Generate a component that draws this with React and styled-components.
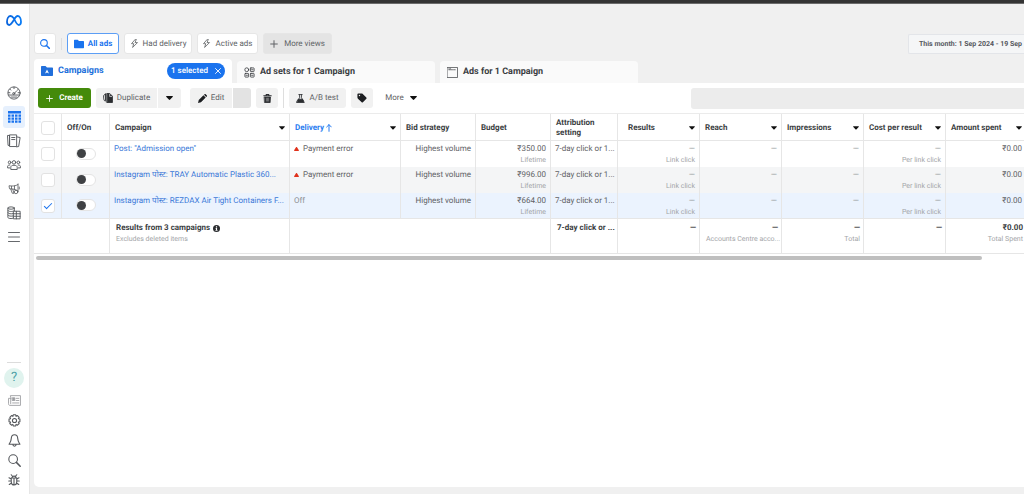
import React from "react";
import styled, { createGlobalStyle, css } from "styled-components";

const GlobalStyle = createGlobalStyle`
  *, *::before, *::after { box-sizing: border-box; }
  body {
    margin: 0;
    background: #f0f0f0;
    color: #3b3e42;
    font-family: Roboto, "Noto Sans", "Liberation Sans", sans-serif;
    font-size: 8px;
    line-height: 12px;
    text-rendering: geometricPrecision;
    overflow: hidden;
  }
  button, input { font: inherit; color: inherit; margin: 0; padding: 0; border: 0; text-rendering: inherit; }
  button { cursor: pointer; background: none; }
  a { text-decoration: none; color: inherit; }
`;

const Page = styled.div`
  display: flex;
  flex-direction: column;
  height: 100vh;
`;
const WindowEdge = styled.div`
  flex: none;
  height: 4px;
  background: #343434;
  border-bottom: 1px solid #6b6b6b;
`;
const Body = styled.div`
  flex: 1;
  min-height: 0;
  display: flex;
`;

/* Sidebar */
const Sidebar = styled.nav`
  flex: none;
  width: 30px;
  padding: 6px 1px 4px 0;
  background: #fff;
  border-right: 1px solid #e6e6e6;
  display: flex;
  flex-direction: column;
  justify-content: space-between;
`;
const NavGroup = styled.div`
  display: flex;
  flex-direction: column;
  align-items: center;
  gap: ${(p) => p.$gap || 0}px;
`;
const Brand = styled.a`
  display: flex;
  height: 21px;
  align-items: center;
  margin-bottom: 49px;
`;
const NavLink = styled.a`
  display: grid;
  place-items: center;
  width: 22px;
  height: ${(p) => (p.$small ? 20 : 22)}px;
  border-radius: 3px;
  color: ${(p) => (p.$active ? "#1a73ee" : "#55585c")};
  background: ${(p) => (p.$active ? "#e6f0fd" : "none")};
`;
const NavRule = styled.div`
  width: 14px;
  height: 1px;
  margin-bottom: 5px;
  background: #dcdcdc;
`;
const Help = styled.button`
  width: 20px;
  height: 20px;
  border-radius: 50%;
  background: #e0f3ee;
  color: #4a9fa5;
  font-size: 13px;
  margin-bottom: 2px;
`;

/* Main column */
const Main = styled.main`
  flex: 1;
  min-width: 0;
  padding: 29px 0 7px 4px;
  display: flex;
  flex-direction: column;
`;
const Views = styled.div`
  display: flex;
  align-items: center;
  gap: 5px;
  height: 21px;
`;
const Rule = styled.span`
  width: 1px;
  height: ${(p) => p.$height}px;
  background: #dedede;
`;
const ViewButton = styled.button`
  display: flex;
  align-items: center;
  justify-content: center;
  gap: ${(p) => p.$gap || 4}px;
  width: ${(p) => p.$width}px;
  height: 21px;
  border-radius: 3px;
  border: 1px solid ${(p) => (p.$active ? "#5c9ef5" : "#e6e6e6")};
  background: ${(p) => (p.$muted ? "#e4e4e4" : "#fff")};
  color: ${(p) => (p.$active || p.$accent ? "#1a73ee" : "#606366")};
  font-weight: ${(p) => (p.$active ? 700 : 400)};
  white-space: nowrap;
`;
const DateRange = styled.button`
  width: 116px;
  height: 20px;
  margin-left: auto;
  padding-left: 10px;
  border: 1px solid #e3e5e9;
  border-right: 0;
  border-radius: 2px 0 0 2px;
  background: #f5f6f7;
  color: #55585e;
  font-size: 7px;
  font-weight: 700;
  text-align: left;
  white-space: nowrap;
`;

const Tabs = styled.div`
  display: flex;
  align-items: flex-end;
  gap: 5px;
  height: 24px;
  margin-top: 5px;
`;
const Tab = styled.div`
  flex: none;
  display: flex;
  align-items: center;
  gap: 5px;
  width: 198px;
  height: ${(p) => (p.$active ? 24 : 22)}px;
  padding: 0 7px;
  border-radius: 4px 4px 0 0;
  background: ${(p) => (p.$active ? "#fff" : "#fafafa")};
  color: ${(p) => (p.$active ? "#216fdb" : "#3b3e42")};
  font-size: 9px;
  font-weight: 700;
`;
const TabLabel = styled.button`
  display: flex;
  align-items: center;
  gap: 5px;
`;
const Chip = styled.button`
  display: flex;
  align-items: center;
  justify-content: center;
  gap: 7px;
  width: 58px;
  height: 16px;
  margin-left: auto;
  border-radius: 8px;
  background: #1a73ee;
  color: #fff;
  font-size: 8px;
  font-weight: 500;
`;

const Panel = styled.section`
  flex: 1;
  min-height: 0;
  background: #fff;
  border-radius: 0 0 0 5px;
  overflow: hidden;
`;
const Toolbar = styled.div`
  display: flex;
  align-items: center;
  gap: 5px;
  height: 31px;
  padding-left: 4px;
  border-bottom: 1px solid #ebebeb;
`;
const ToolButton = styled.button`
  flex: none;
  display: flex;
  align-items: center;
  justify-content: center;
  gap: ${(p) => p.$gap || 4}px;
  width: ${(p) => p.$width}px;
  height: 20px;
  border-radius: ${(p) => p.$radius || "3px"};
  background: #f1f1f1;
  color: #5f6265;
  white-space: nowrap;
  ${(p) => p.$kind === "primary" && css`background: #448a0a; color: #fff; font-weight: 700;`}
  ${(p) => p.$kind === "plain" && css`background: none;`}
  ${(p) => p.$kind === "disabled" && css`background: #e3e3e3;`}
`;
const Split = styled.div`
  display: flex;
  gap: ${(p) => p.$gap}px;
  margin-right: ${(p) => p.$after || 0}px;
`;
const SideActions = styled.div`
  width: calc(100% - 653px);
  height: 21px;
  margin-left: auto;
  border-radius: 3px 0 0 3px;
  background: #ececec;
`;

/* Table */
const Table = styled.table`
  width: calc(100% + 3px);
  table-layout: fixed;
  border-collapse: separate;
  border-spacing: 0;
`;
const Col = styled.col`
  width: ${(p) => (p.$width ? `${p.$width}px` : "auto")};
`;
const Th = styled.th`
  height: 27px;
  padding: 2px 5px 0;
  border-right: 1px solid #e6e6e6;
  border-bottom: 1px solid #e6e6e6;
  color: ${(p) => (p.$sorted ? "#2a7df0" : "#3b3e42")};
  font-weight: 700;
  text-align: ${(p) => p.$align || "left"};
  line-height: 10px;
`;
const HeadRow = styled.div`
  display: flex;
  align-items: center;
  gap: 2px;
  padding-left: ${(p) => p.$indent || 0}px;
`;
const HeadCaret = styled.button`
  display: flex;
  margin-left: auto;
  margin-right: -1px;
  color: #111;
`;
const Td = styled.td`
  height: 26px;
  padding: 2px 4px 0 4px;
  vertical-align: top;
  text-align: ${(p) => p.$align || "right"};
  border-right: 1px solid #e6e6e6;
  color: #5f6265;
  overflow: hidden;
  white-space: nowrap;
`;
const Row = styled.tr`
  background: ${(p) => p.$tint};
  &:last-child td { border-bottom: 1px solid #e6e6e6; }
`;
const CenterTd = styled(Td)`
  padding: 0;
  text-align: center;
  vertical-align: middle;
`;
const CampaignLink = styled.a`
  display: block;
  color: #3a78d8;
`;
const Primary = styled.div`
  height: 12px;
  color: ${(p) => (p.$faint ? "#8d9094" : "#5f6265")};
`;
const Secondary = styled.div`
  height: 11px;
  font-size: 7px;
  line-height: 11px;
  color: #a3a5a8;
`;
const Status = styled.div`
  display: flex;
  align-items: center;
  gap: 4px;
  height: 12px;
`;
const TotalTd = styled.td`
  height: 35px;
  padding: 3px 3px 0 6px;
  vertical-align: top;
  text-align: ${(p) => p.$align || "right"};
  border-right: 1px solid #e6e6e6;
  border-bottom: 1px solid #e6e6e6;
  white-space: nowrap;
  overflow: hidden;
`;
const TotalMain = styled.div`
  display: flex;
  align-items: center;
  gap: 3px;
  justify-content: ${(p) => (p.$left ? "flex-start" : "flex-end")};
  height: 12px;
  font-weight: 700;
  color: #3b3e42;
`;
const CheckBox = styled.input.attrs({ type: "checkbox" })`
  appearance: none;
  display: inline-grid;
  place-items: center;
  vertical-align: middle;
  width: 14px;
  height: 14px;
  border: 1px solid #e2e2e2;
  border-radius: 3px;
  background: #fff;
  &:checked::after {
    content: "";
    width: 8px;
    height: 4px;
    margin-bottom: 2px;
    border-left: 1px solid #1a73ee;
    border-bottom: 1px solid #1a73ee;
    transform: rotate(-45deg);
  }
`;
const Toggle = styled.input.attrs({ type: "checkbox", role: "switch" })`
  appearance: none;
  display: inline-flex;
  align-items: center;
  vertical-align: middle;
  width: 20px;
  height: 12px;
  border: 1px solid #e4e4e4;
  border-radius: 6px;
  background: #fff;
  &::before {
    content: "";
    width: 9px;
    height: 9px;
    border-radius: 50%;
    background: #3f4144;
  }
`;
const ScrollTrack = styled.div`
  padding: 2px 42px 0 2px;
`;
const ScrollThumb = styled.div`
  height: 4px;
  border-radius: 2px;
  background: #bfbfbf;
`;

/* Icons */
const Svg = ({ s = 14, h, box = "0 0 24 24", w = 1.6, children, ...rest }) => (
  <svg width={s} height={h || s} viewBox={box} fill="none" stroke="currentColor" strokeWidth={w}
    strokeLinecap="round" strokeLinejoin="round" aria-hidden="true" {...rest}>{children}</svg>
);
const Solid = (p) => <Svg {...p} fill="currentColor" stroke="none" />;

const MetaLogo = () => (
  <Svg s={16} h={11} box="0 0 32 22" w={3.6} stroke="url(#brand)">
    <defs>
      <linearGradient id="brand" x1="0" x2="1" y1="0" y2="0">
        <stop offset="0" stopColor="#0a64dc" /><stop offset="1" stopColor="#0a7cf5" />
      </linearGradient>
    </defs>
    <path d="M16 7 C13.500 3.500 11.500 2 9.200 2 C5 2 2 7.500 2 13.700 C2 17.500 3.800 20 6.500 20 C9.500 20 11.500 17 16 9.500 C19 4.500 20.500 2 23.200 2 C27.200 2 30 7.500 30 13.700 C30 17.500 28.300 20 25.500 20 C22.500 20 20.500 17 16 7" />
  </Svg>
);
const Gauge = () => (
  <Svg><circle cx="12" cy="12" r="10.500" /><path d="M3 15.500h18M12 13l5-5M12 2v2.500M5 5.500l1.500 1.500M19 5.500l-.8.8M2.500 11.500H5M19 11.500h2.500" /><circle cx="11.500" cy="13" r="1.800" /><path d="M7 19h10" /></Svg>
);
const TableIcon = () => (
  <Solid s={13} h={12} box="0 0 26 24">
    <path d="M0 0h26v5H0z" />
    {[7, 13, 19].map((y) => [0, 7, 14, 21].map((x) => <rect key={`${x}-${y}`} x={x} y={y} width="5" height="4.500" />))}
  </Solid>
);
const Pages = () => (
  <Svg><path d="M1.500 2.500h3v17h-2zM5 1.500h11.500v20H5zM8 6h5.500M8 9.500h5.500M17 5l5.500 1-2.500 15.500-3.500.5" /></Svg>
);
const People = () => (
  <Svg><circle cx="12" cy="7.500" r="3" /><circle cx="4.500" cy="7.500" r="2.300" /><circle cx="19.500" cy="7.500" r="2.300" /><path d="M6.500 19v-3c0-2.500 2-3.500 5.500-3.500s5.500 1 5.500 3.500v3zM4.500 17H1v-2.500c0-1.700 1.500-2.500 4-2.500M19.500 17H23v-2.500c0-1.700-1.500-2.500-4-2.500" /></Svg>
);
const Megaphone = () => (
  <Svg s={12}><path d="M20 2v15M20 3C15 6.500 9 6.500 2 5.500l1 6 2.500.5c5-.5 10 1 14.500 4M5.500 12l3 8.500h3.500l-2.500-8M13 6v7" /><circle cx="16" cy="18" r="3.500" /><path d="M22.500 8v4M7 6.500v5" /></Svg>
);
const Coins = () => (
  <Svg><ellipse cx="7" cy="3.500" rx="5.500" ry="2" /><path d="M1.500 3.500v16c0 1.300 2.500 2 5.500 2s4-.3 4-1M12.500 3.500V8M1.500 7.500c0 2.500 8 2.500 10.500 1M1.500 11.500c0 2 6 2.500 9.500 1.500M1.500 15.500c0 2 6 2.500 9.500 1.500M11.500 9h11v13h-11zM11.500 13.300h11M11.500 17.600h11M16 9v13" /></Svg>
);
const Menu = () => <Svg s={12} h={10} box="0 0 24 20" w={1.8}><path d="M1 1h22M1 10h22M1 19h22" /></Svg>;
const News = () => (
  <Svg s={13} color="#9b9da0"><path d="M5 3h18v18H3.500C1.500 21 1 19.500 1 18V8h4zM5 8v10M15 8h5M15 12h5M8.500 16.500H20" /><path d="M8.500 7h4v5h-4z" fill="currentColor" /></Svg>
);
const Gear = () => (
  <Svg s={13} w={2}><circle cx="12" cy="12" r="3.800" /><path d="M9.800 1.500h4.400l.7 2.900 2.500-1.500 3.200 3.200-1.500 2.500 2.900.8v4.900l-2.900.7 1.500 2.600-3.200 3.100-2.500-1.500-.7 2.900H9.800l-.8-2.900-2.500 1.500-3.200-3.100L4.800 15l-2.900-.7V9.400l2.900-.8-1.500-2.500 3.200-3.200L9 4.400z" /></Svg>
);
const Bell = () => <Svg s={13} w={2}><path d="M12 1.500c-4 0-5.800 3-6 7C5.800 13 4.500 14.500 2 19h20c-2.500-4.500-3.800-6-4-10.500-.2-4-2-7-6-7zM9 19.500c0 4 6 4 6 0" /></Svg>;
const Search = ({ s = 13, w = 2 }) => <Svg s={s} w={w}><circle cx="9.500" cy="9.500" r="8" /><path d="M15.500 15.500l7 7" strokeWidth={w + 0.8} /></Svg>;
const Bug = () => (
  <Svg s={12} w={2.2}><path d="M6.500 8h11v8c0 4-2.500 6-5.500 6s-5.500-2-5.500-6zM12 8v14M8 8c0-5 8-5 8 0M8.500 4L6.500 1.500M15.500 4l2-2.500M6.500 10L2 7.500M17.500 10L22 7.500M6.500 14h-5M17.500 14h5M7 18l-4.500 3M17 18l4.500 3" /></Svg>
);
const Folder = ({ s = 10, mark }) => (
  <Solid s={s} box="0 0 24 22"><path d="M1.500 1H9l3 3h10.500C23.500 4 24 4.500 24 5.500v14c0 1-.5 1.500-1.500 1.500h-21C.5 21 0 20.500 0 19.500v-17C0 1.500.5 1 1.500 1z" />{mark && <path d="M12 8l4 8-4-2-4 2z" fill="#fff" />}</Solid>
);
const Bolt = () => <Svg s={9} w={2.2}><path d="M13.500 1.500L4 12.500h6L7 22.500 20 9.500h-6.500l3-8z" /></Svg>;
const Plus = ({ s = 8 }) => <Svg s={s} w={3}><path d="M12 2v20M2 12h20" /></Svg>;
const Cross = () => <Svg s={6} w={3.6}><path d="M2 2l20 20M22 2L2 22" /></Svg>;
const Grid = () => (
  <Svg s={11} w={1.8}><circle cx="6" cy="6" r="4.200" /><rect x="14" y="2" width="8" height="8" rx="1" /><rect x="2" y="14" width="8" height="8" rx="1" /><rect x="14" y="14" width="8" height="8" rx="1" /><path d="M16.500 6h3M16.500 18h3M4.500 18h3" /></Svg>
);
const AdFrame = () => <Svg s={11}><rect x="1" y="1" width="22" height="22" /><path d="M4 6h16M4 4h1M7 4h1" strokeDasharray="2 2" /></Svg>;
const Copy = () => (
  <Svg s={10} w={2.2} color="#2b2d30"><path d="M6 2.500C2 3 1.500 6 1.500 10S2 18 5 20" /><path d="M10 1h6l6.500 6.500V23H10z" fill="currentColor" /><path d="M16 3v5.500h5" stroke="#f1f1f1" strokeWidth="1.600" /><path d="M6 2.500V18" /></Svg>
);
const Pencil = () => <Solid s={9} color="#1c1e21"><path d="M0 24l2-8L14.500 3.500l6 6L8 22zM16 2l1.500-1.500c1-.8 2-.6 3 .3l2.700 2.700c1 1 1 2 .3 3L22 8z" /></Solid>;
const Trash = () => <Svg s={9} w={2} color="#2b2d30"><path d="M2 4.500h20M8.500 4V1.500h7V4" strokeWidth="2.800" /><path d="M4 8h16l-1 15H5z" fill="currentColor" /><path d="M9 11v8M12 11v8M15 11v8" stroke="#e6e6e6" strokeWidth="1" /></Svg>;
const Flask = () => <Svg s={9} w={2.2} color="#2b2d30"><path d="M7.500 1.500h9M9.500 2v8L5 17M14.500 2v8L19 17" /><path d="M6.500 14h11l4.500 8.500H2z" fill="currentColor" /></Svg>;
const Tag = () => <Solid s={10} color="#1c1e21"><path d="M1 3c0-1.300.7-2 2-2h8c1.200 0 2 .3 2.800 1.100l8.600 8.600c1 1 1 2 0 3l-8.200 8.600c-1 1-2 1-3 0L2.200 13.800C1.300 13 1 12 1 11z" /><circle cx="6" cy="6" r="1.700" fill="#f1f1f1" /></Solid>;
const Caret = ({ s = 7 }) => <Solid s={s} h={4} box="0 0 14 8" color="#111"><path d="M1.500 0h11c1.300 0 1.500 1 .7 1.800L8.300 7.200c-.8.900-1.800.9-2.600 0L.8 1.800C0 1 .2 0 1.500 0z" /></Solid>;
const UpArrow = () => <Svg s={6} h={8} box="0 0 18 24" w={3}><path d="M9 22V2M2 9l7-7 7 7" /></Svg>;
const Warning = () => <Solid s={5} h={4} box="0 0 10 8" color="#e0321c"><path d="M4 .6c.5-.8 1.500-.8 2 0l3.800 5.800c.4.900-.1 1.600-1 1.600H1.200c-.9 0-1.400-.7-1-1.600z" /></Solid>;
const Info = () => <Solid s={7} color="#2b2d30"><circle cx="12" cy="12" r="12" /><path d="M10 4.500h4v4h-4zM9 10.500h5v7h1.500v2.500h-7v-2.500H10V13H9z" fill="#fff" /></Solid>;

const columns = [
  { label: "Campaign", caret: true },
  { label: "Delivery", caret: true, sorted: true, width: 111 },
  { label: "Bid strategy", width: 75 },
  { label: "Budget", width: 75 },
  { label: "Attribution setting", width: 67 },
  { label: "Results", caret: true, width: 82, indent: 5 },
  { label: "Reach", caret: true, width: 82 },
  { label: "Impressions", caret: true, width: 82 },
  { label: "Cost per result", caret: true, width: 82 },
  { label: "Amount spent", caret: true, width: 81 },
];
const campaigns = [
  { name: "Post: \"Admission open\"", error: true, budget: "₹350.00", tint: "#fff" },
  { name: "Instagram पोस्ट: TRAY Automatic Plastic 360...", error: true, budget: "₹996.00", tint: "#f4f5f6" },
  { name: "Instagram पोस्ट: REZDAX Air Tight Containers F...", budget: "₹664.00", tint: "#ebf3fe", checked: true },
];
const Blank = () => <Primary $faint>—</Primary>;

function CampaignRow({ item }) {
  return (
    <Row $tint={item.tint}>
      <CenterTd><CheckBox defaultChecked={item.checked} aria-label={`Select ${item.name}`} /></CenterTd>
      <CenterTd><Toggle aria-label={`Turn on ${item.name}`} /></CenterTd>
      <Td $align="left"><CampaignLink href="#campaign">{item.name}</CampaignLink></Td>
      <Td $align="left">
        {item.error ? <Status><Warning />Payment error</Status> : <Primary $faint>Off</Primary>}
      </Td>
      <Td>Highest volume</Td>
      <Td><Primary>{item.budget}</Primary><Secondary>Lifetime</Secondary></Td>
      <Td $align="left">7-day click or 1...</Td>
      <Td><Blank /><Secondary>Link click</Secondary></Td>
      <Td><Blank /></Td>
      <Td><Blank /></Td>
      <Td><Blank /><Secondary>Per link click</Secondary></Td>
      <Td><Primary>₹0.00</Primary></Td>
    </Row>
  );
}

export default function App() {
  return (
    <Page>
      <GlobalStyle />
      <WindowEdge />
      <Body>
        <Sidebar aria-label="Tools">
          <NavGroup $gap={2}>
            <Brand href="#home" aria-label="Meta"><MetaLogo /></Brand>
            <NavLink href="#overview" aria-label="Overview"><Gauge /></NavLink>
            <NavLink href="#campaigns" aria-label="Campaigns" $active><TableIcon /></NavLink>
            <NavLink href="#reports" aria-label="Reports"><Pages /></NavLink>
            <NavLink href="#audiences" aria-label="Audiences"><People /></NavLink>
            <NavLink href="#ads" aria-label="Advertising settings"><Megaphone /></NavLink>
            <NavLink href="#billing" aria-label="Billing"><Coins /></NavLink>
            <NavLink href="#all" aria-label="All tools"><Menu /></NavLink>
          </NavGroup>
          <NavGroup>
            <NavRule />
            <Help aria-label="Help">?</Help>
            <NavLink $small href="#news" aria-label="News"><News /></NavLink>
            <NavLink $small href="#settings" aria-label="Settings"><Gear /></NavLink>
            <NavLink $small href="#alerts" aria-label="Notifications"><Bell /></NavLink>
            <NavLink $small href="#search" aria-label="Search"><Search /></NavLink>
            <NavLink $small href="#bug" aria-label="Report a problem"><Bug /></NavLink>
          </NavGroup>
        </Sidebar>
        <Main>
          <Views>
            <ViewButton $width={22} $accent aria-label="Search"><Search s={10} w={2.6} /></ViewButton>
            <Rule $height={12} />
            <ViewButton $width={52} $active><Folder />All ads</ViewButton>
            <ViewButton $width={68}><Bolt />Had delivery</ViewButton>
            <ViewButton $width={61}><Bolt />Active ads</ViewButton>
            <ViewButton $width={69} $gap={6} $muted><Plus />More views</ViewButton>
            <DateRange>This month: 1 Sep 2024 - 19 Sep</DateRange>
          </Views>
          <Tabs>
            <Tab $active>
              <TabLabel><Folder s={12} mark />Campaigns</TabLabel>
              <Chip>1 selected<Cross /></Chip>
            </Tab>
            <Tab><TabLabel><Grid />Ad sets for 1 Campaign</TabLabel></Tab>
            <Tab><TabLabel><AdFrame />Ads for 1 Campaign</TabLabel></Tab>
          </Tabs>
          <Panel>
            <Toolbar>
              <ToolButton $width={53} $gap={6} $kind="primary"><Plus s={7} />Create</ToolButton>
              <Split $gap={1} $after={4}>
                <ToolButton $width={61} $radius="3px 0 0 3px"><Copy />Duplicate</ToolButton>
                <ToolButton $width={23} $radius="0 3px 3px 0" aria-label="Duplicate options"><Caret /></ToolButton>
              </Split>
              <Split $gap={1}>
                <ToolButton $width={42} $radius="3px 0 0 3px"><Pencil />Edit</ToolButton>
                <ToolButton $width={18} $radius="0 3px 3px 0" $kind="disabled" aria-label="Edit options" />
              </Split>
              <ToolButton $width={22} aria-label="Delete"><Trash /></ToolButton>
              <Rule $height={20} />
              <ToolButton $width={57}><Flask />A/B test</ToolButton>
              <ToolButton $width={22} aria-label="Tags"><Tag /></ToolButton>
              <ToolButton $width={46} $gap={6} $kind="plain">More<Caret /></ToolButton>
              <SideActions />
            </Toolbar>
            <Table>
              <colgroup>
                <Col $width={28} /><Col $width={48} />
                {columns.map((c) => <Col key={c.label} $width={c.width} />)}
              </colgroup>
              <thead>
                <tr>
                  <Th $align="center"><CheckBox aria-label="Select all" /></Th>
                  <Th>Off/On</Th>
                  {columns.map((c) => (
                    <Th key={c.label} $sorted={c.sorted}>
                      <HeadRow $indent={c.indent}>
                        {c.label}{c.sorted && <UpArrow />}
                        {c.caret && <HeadCaret aria-label={`${c.label} options`}><Caret s={6} /></HeadCaret>}
                      </HeadRow>
                    </Th>
                  ))}
                </tr>
              </thead>
              <tbody>{campaigns.map((c) => <CampaignRow key={c.name} item={c} />)}</tbody>
              <tfoot>
                <tr>
                  <TotalTd colSpan={2} />
                  <TotalTd $align="left"><TotalMain $left>Results from 3 campaigns <Info /></TotalMain><Secondary>Excludes deleted items</Secondary></TotalTd>
                  <TotalTd colSpan={3} />
                  <TotalTd $align="left"><TotalMain $left>7-day click or ...</TotalMain></TotalTd>
                  <TotalTd><TotalMain>—</TotalMain></TotalTd>
                  <TotalTd><TotalMain>—</TotalMain><Secondary>Accounts Centre acco...</Secondary></TotalTd>
                  <TotalTd><TotalMain>—</TotalMain><Secondary>Total</Secondary></TotalTd>
                  <TotalTd><TotalMain>—</TotalMain></TotalTd>
                  <TotalTd><TotalMain>₹0.00</TotalMain><Secondary>Total Spent</Secondary></TotalTd>
                </tr>
              </tfoot>
            </Table>
            <ScrollTrack><ScrollThumb /></ScrollTrack>
          </Panel>
        </Main>
      </Body>
    </Page>
  );
}
